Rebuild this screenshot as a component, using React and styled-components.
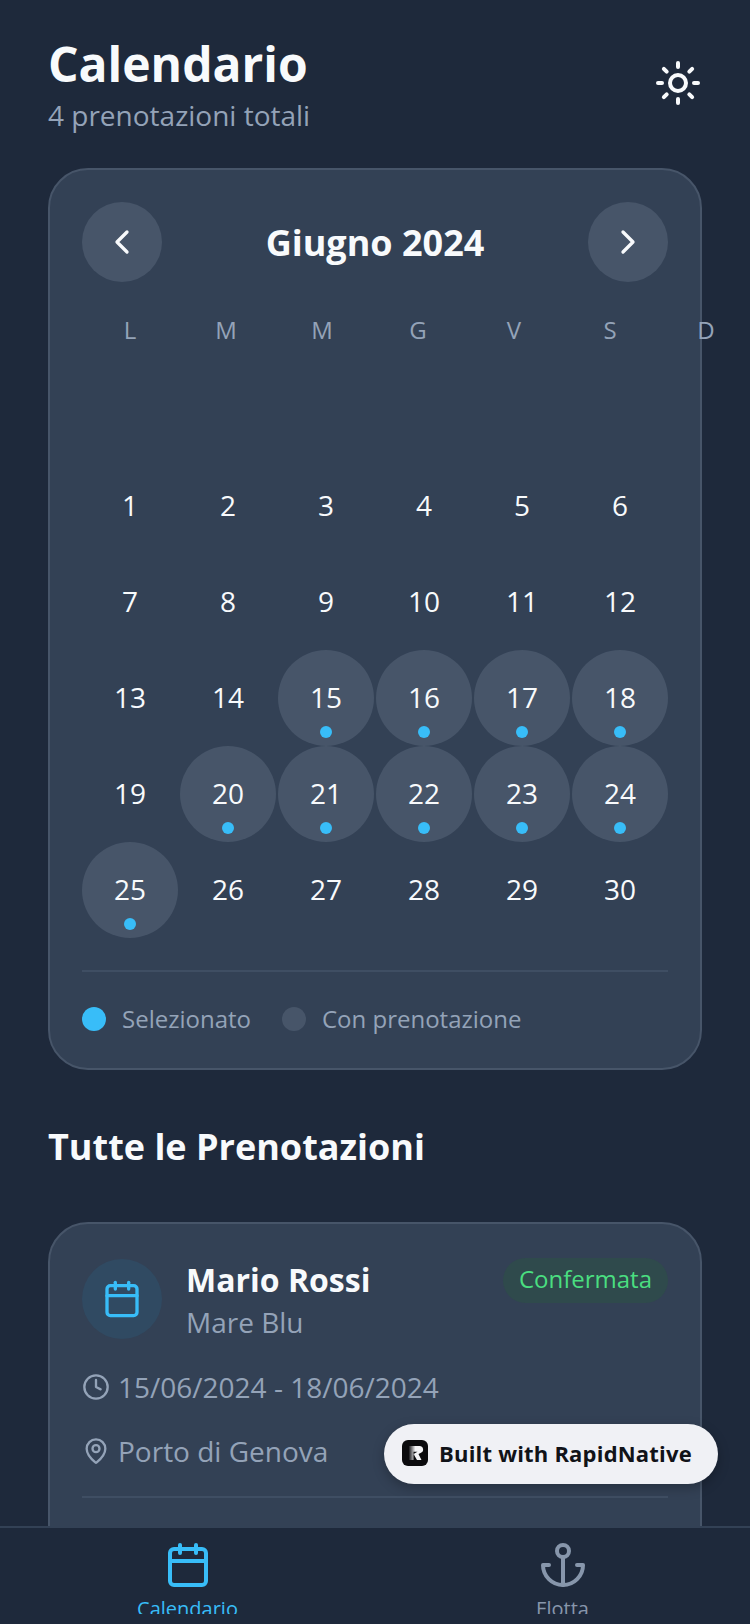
import React from "react";
import styled, { createGlobalStyle } from "styled-components";
import { Sun, ChevronLeft, ChevronRight, Calendar, Clock, MapPin } from "lucide-react";

const GlobalStyle = createGlobalStyle`
  html, body {
    margin: 0;
    padding: 0;
    background: #1e293b;
  }
  * {
    box-sizing: border-box;
  }
`;

const Screen = styled.div`
  position: relative;
  width: 750px;
  height: 1624px;
  display: flex;
  flex-direction: column;
  overflow: hidden;
  background: #1e293b;
  color: #f8fafc;
  font-family: "Open Sans", sans-serif;
`;

const Scroll = styled.div`
  flex: 1;
  min-height: 0;
  overflow: hidden;
  padding: 31px 48px 0;
`;

const Header = styled.header`
  display: flex;
  justify-content: space-between;
  align-items: center;
  padding-bottom: 34px;
`;

const Title = styled.h1`
  margin: 0;
  font-size: 48px;
  line-height: 65px;
  font-weight: 700;
`;

const Subtitle = styled.div`
  font-size: 28px;
  line-height: 38px;
  color: #94a3b8;
`;

const Card = styled.section`
  background: #334155;
  border: 2px solid #475569;
  border-radius: 40px;
  padding: 32px;
  padding-bottom: ${(p) => (p.$open ? "120px" : "32px")};
`;

const MonthRow = styled.div`
  display: flex;
  justify-content: space-between;
  align-items: center;
`;

const NavButton = styled.button`
  width: 80px;
  height: 80px;
  padding: 0;
  border: none;
  border-radius: 50%;
  background: #475569;
  color: #f8fafc;
  display: flex;
  align-items: center;
  justify-content: center;
`;

const MonthName = styled.div`
  font-size: 36px;
  line-height: 49px;
  font-weight: 700;
`;

const Weekdays = styled.div`
  display: flex;
  margin: 31px 0 16px;
`;

const Weekday = styled.div`
  flex: 0 0 96px;
  text-align: center;
  font-size: 24px;
  line-height: 33px;
  color: #94a3b8;
`;

const Days = styled.div`
  display: flex;
  flex-wrap: wrap;
  column-gap: 2px;
`;

const Day = styled.div`
  position: relative;
  width: 96px;
  height: 96px;
  padding-bottom: 2px;
  border-radius: 50%;
  display: flex;
  align-items: center;
  justify-content: center;
  font-size: 28px;
  line-height: 38px;
  background: ${(p) => (p.$booked ? "#475569" : "transparent")};
`;

const BookingDot = styled.span`
  position: absolute;
  left: 42px;
  bottom: 8px;
  width: 12px;
  height: 12px;
  border-radius: 50%;
  background: #38bdf8;
`;

const Divider = styled.div`
  height: 2px;
  background: #3f4e63;
`;

const CalendarDivider = styled(Divider)`
  margin-top: 32px;
`;

const Legend = styled.div`
  display: flex;
  align-items: center;
  gap: 31px;
  padding-top: 30px;
  margin-bottom: 1px;
`;

const LegendItem = styled.div`
  display: flex;
  align-items: center;
  gap: 16px;
  font-size: 24px;
  line-height: 33px;
  color: #94a3b8;
`;

const LegendDot = styled.span`
  width: 24px;
  height: 24px;
  border-radius: 50%;
  background: ${(p) => p.$color};
`;

const SectionTitle = styled.h2`
  margin: 52px 0 51px;
  font-size: 36px;
  line-height: 49px;
  font-weight: 700;
`;

const BookingTop = styled.div`
  display: flex;
  align-items: flex-start;
  gap: 24px;
`;

const Avatar = styled.div`
  width: 80px;
  height: 80px;
  margin-top: 3px;
  border-radius: 50%;
  background: #304a62;
  color: #38bdf8;
  display: flex;
  align-items: center;
  justify-content: center;
`;

const BookingInfo = styled.div`
  flex: 1;
`;

const Name = styled.div`
  font-size: 32px;
  line-height: 44px;
  font-weight: 700;
  margin-top: 2px;
`;

const Boat = styled.div`
  margin-top: 1px;
  font-size: 28px;
  line-height: 38px;
  color: #94a3b8;
`;

const Badge = styled.div`
  margin-top: 2px;
  padding: 4px 16px 8px;
  border-radius: 24px;
  background: #2f4a4c;
  color: #4ade80;
  font-size: 24px;
  line-height: 33px;
`;

const MetaRow = styled.div`
  display: flex;
  align-items: center;
  gap: 8px;
  margin-top: ${(p) => p.$gap}px;
  font-size: 28px;
  line-height: 38px;
  color: #94a3b8;
`;

const BookingDivider = styled(Divider)`
  margin-top: 26px;
`;

const TabBar = styled.nav`
  flex: 0 0 98px;
  display: flex;
  border-top: 2px solid #334155;
  background: #1e293b;
  padding-top: 13px;
  position: relative;
`;

const Tab = styled.div`
  flex: 1;
  display: flex;
  flex-direction: column;
  align-items: center;
  color: ${(p) => (p.$active ? "#38bdf8" : "#8796ab")};
`;

const TabLabel = styled.div`
  margin-top: 6px;
  height: 19px;
  overflow: hidden;
  font-size: 20px;
  line-height: 27px;
`;

const BuiltBadge = styled.div`
  position: absolute;
  left: 384px;
  top: 1424px;
  width: 334px;
  height: 60px;
  padding: 0 0 2px 18px;
  border-radius: 30px;
  background: #f0f1f5;
  color: #111318;
  display: flex;
  align-items: center;
  gap: 11px;
  font-size: 22px;
  letter-spacing: 0.2px;
  font-weight: 700;
  box-shadow: 0 4px 12px rgba(0, 0, 0, 0.25);
`;

const bookedDays = [15, 16, 17, 18, 20, 21, 22, 23, 24, 25];
const weekdays = ["L", "M", "M", "G", "V", "S", "D"];
const days = Array.from({ length: 30 }, (_, i) => i + 1);

function RapidLogo() {
  return (
    <svg width="26" height="26" viewBox="0 0 26 26">
      <defs>
        <linearGradient id="rapidFade" x1="0" y1="0" x2="1" y2="0">
          <stop offset="0" stopColor="#1a1a1d" />
          <stop offset="0.45" stopColor="#f4f4f6" />
        </linearGradient>
      </defs>
      <rect width="26" height="26" rx="6" fill="#0b0b0d" />
      <path
        d="M7 6h10.500a3.500 3.500 0 0 1 1.500 6.700L16.500 14l3 6h-4.500L11.500 14l4-2.300H11.500V20H7z"
        fill="url(#rapidFade)"
      />
    </svg>
  );
}

function AnchorIcon() {
  return (
    <svg
      width="48"
      height="48"
      viewBox="0 0 24 24"
      fill="none"
      stroke="currentColor"
      strokeWidth="2"
      strokeLinecap="round"
      strokeLinejoin="round"
    >
      <circle cx="12" cy="5" r="3" />
      <line x1="12" y1="22" x2="12" y2="8" />
      <path d="M5 12H2a10 10 0 0 0 20 0h-3" />
    </svg>
  );
}

export default function App() {
  return (
    <Screen>
      <GlobalStyle />
      <Scroll>
        <Header>
          <div>
            <Title>Calendario</Title>
            <Subtitle>4 prenotazioni totali</Subtitle>
          </div>
          <Sun size={48} color="#f8fafc" />
        </Header>

        <Card>
          <MonthRow>
            <NavButton>
              <ChevronLeft size={40} />
            </NavButton>
            <MonthName>Giugno 2024</MonthName>
            <NavButton>
              <ChevronRight size={40} />
            </NavButton>
          </MonthRow>
          <Weekdays>
            {weekdays.map((d, i) => (
              <Weekday key={i}>{d}</Weekday>
            ))}
          </Weekdays>
          <Days>
            {Array.from({ length: 6 }, (_, i) => (
              <Day key={"empty" + i} />
            ))}
            {days.map((d) => {
              const booked = bookedDays.includes(d);
              return (
                <Day key={d} $booked={booked}>
                  {d}
                  {booked && <BookingDot />}
                </Day>
              );
            })}
          </Days>
          <CalendarDivider />
          <Legend>
            <LegendItem>
              <LegendDot $color="#38bdf8" />
              Selezionato
            </LegendItem>
            <LegendItem>
              <LegendDot $color="#475569" />
              Con prenotazione
            </LegendItem>
          </Legend>
        </Card>

        <SectionTitle>Tutte le Prenotazioni</SectionTitle>

        <Card $open>
          <BookingTop>
            <Avatar>
              <Calendar size={40} />
            </Avatar>
            <BookingInfo>
              <Name>Mario Rossi</Name>
              <Boat>Mare Blu</Boat>
            </BookingInfo>
            <Badge>Confermata</Badge>
          </BookingTop>
          <MetaRow $gap={27}>
            <Clock size={28} />
            15/06/2024 - 18/06/2024
          </MetaRow>
          <MetaRow $gap={26}>
            <MapPin size={28} />
            Porto di Genova
          </MetaRow>
          <BookingDivider />
        </Card>
      </Scroll>

      <TabBar>
        <Tab $active>
          <Calendar size={48} />
          <TabLabel>Calendario</TabLabel>
        </Tab>
        <Tab>
          <AnchorIcon />
          <TabLabel>Flotta</TabLabel>
        </Tab>
      </TabBar>

      <BuiltBadge>
        <RapidLogo />
        Built with RapidNative
      </BuiltBadge>
    </Screen>
  );
}
